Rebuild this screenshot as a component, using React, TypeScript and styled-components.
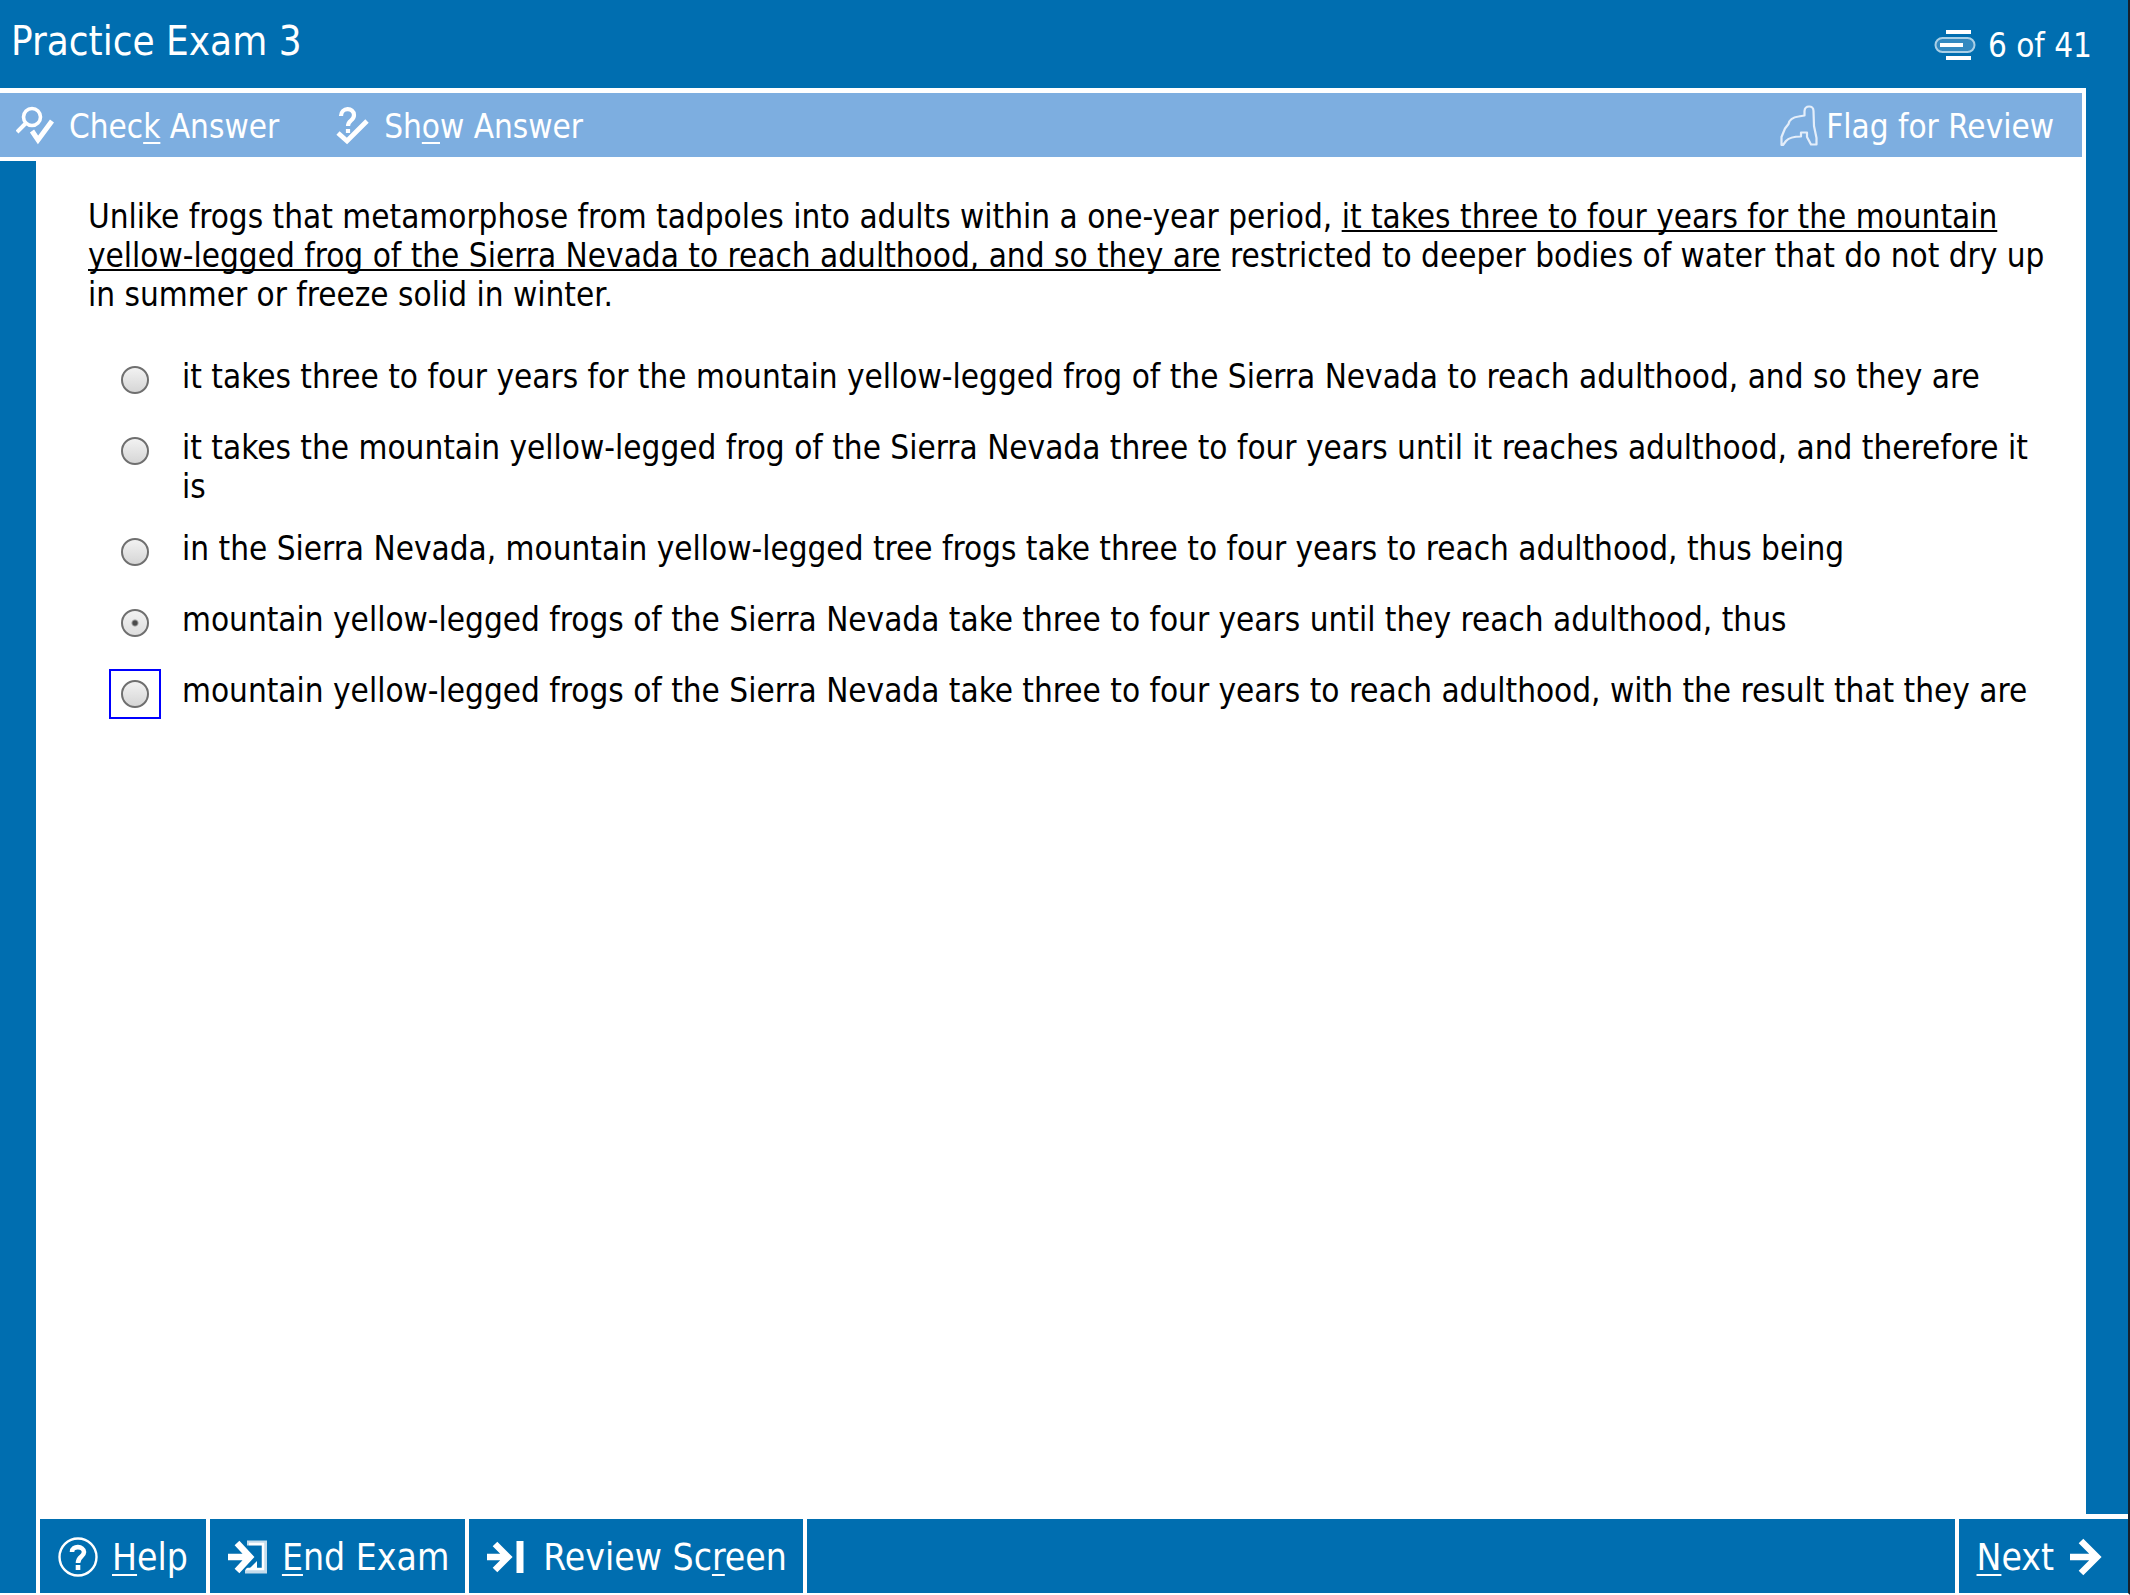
import React, { useState } from "react";
import styled, { createGlobalStyle } from "styled-components";

const blue = "#006eb0";
const lightBlue = "#7daee0";
const uiFont = '"DejaVu Sans Condensed", "Noto Sans", sans-serif';

const GlobalStyle = createGlobalStyle`
  * { box-sizing: border-box; }
  body { margin: 0; background: #fff; font-family: ${uiFont}; }
  button { font: inherit; color: inherit; background: none; border: 0; padding: 0; cursor: pointer; }
`;

const Screen = styled.div`
  display: flex;
  flex-direction: column;
  min-height: 100vh;
  border-right: 2px solid #17202b;
  border-bottom: 2px solid #fff;
  background: ${blue};
`;

const Header = styled.header`
  display: flex;
  align-items: center;
  justify-content: space-between;
  height: 88px;
  padding: 2px 36px 0 11px;
  color: #fff;
`;

const Title = styled.h1`
  margin: 0;
  padding-bottom: 8px;
  font-size: 40px;
  font-weight: 400;
`;

const Progress = styled.div`
  display: flex;
  align-items: center;
  gap: 12px;
  font-size: 33px;
`;

const Middle = styled.div`
  display: flex;
  flex-direction: column;
  flex: 1;
  margin-right: 42px;
`;

const Toolbar = styled.nav`
  display: flex;
  align-items: center;
  gap: 56px;
  height: 73px;
  padding: 2px 28px 0 16px;
  border: solid #fff;
  border-width: 5px 4px 4px 0;
  background: ${lightBlue};
  color: #fff;
`;

const ToolButton = styled.button<{ $gap: number; $end?: boolean }>`
  display: flex;
  align-items: center;
  gap: ${(p) => p.$gap}px;
  margin-left: ${(p) => (p.$end ? "auto" : "0")};
  font-size: 33px;
`;

const Key = styled.span`
  text-decoration: underline;
  text-decoration-thickness: 2px;
  text-underline-offset: 4px;
`;

const Sheet = styled.main`
  flex: 1;
  margin-left: 36px;
  padding: 36px 36px 40px 52px;
  background: #fff;
  color: #000;
  font-size: 33px;
  line-height: 39px;
`;

const Question = styled.p`
  margin: 0;
`;

const Marked = styled.span`
  text-decoration: underline;
  text-decoration-thickness: 2px;
  text-decoration-skip-ink: none;
  text-underline-offset: 2px;
`;

const Options = styled.fieldset`
  display: flex;
  flex-direction: column;
  gap: 21px;
  margin: 41px 0 0;
  padding: 0 0 0 21px;
  border: 0;
`;

const Option = styled.label`
  display: flex;
  align-items: flex-start;
  gap: 21px;
  min-height: 50px;
`;

const RadioBox = styled.span<{ $focused: boolean }>`
  display: grid;
  flex: none;
  place-items: center;
  width: 52px;
  height: 50px;
  border: 2px solid ${(p) => (p.$focused ? "#0000ff" : "transparent")};
`;

const Radio = styled.input`
  appearance: none;
  width: 28px;
  height: 28px;
  margin: 0;
  border: 2px solid #6f6f6f;
  border-radius: 50%;
  background: linear-gradient(#f2f2f2, #d6d6d6);
  outline: none;
  &:checked {
    background: radial-gradient(circle, #4a4a4a 0 2px, transparent 4px), linear-gradient(#f2f2f2, #dedede);
  }
`;

const OptionText = styled.span`
  padding-top: 2px;
`;

const Footer = styled.footer`
  display: flex;
  height: 74px;
  padding-left: 36px;
  color: #fff;
`;

const FooterButton = styled.button<{ $gap: number; $end?: number }>`
  display: flex;
  align-items: center;
  gap: ${(p) => p.$gap}px;
  padding: 2px ${(p) => p.$end ?? 16}px 0 18px;
  border-left: 4px solid #fff;
  font-size: 37px;
`;

const FooterRest = styled.div`
  flex: 1;
  border-left: 4px solid #fff;
`;

const NextCell = styled.div`
  display: flex;
  margin-top: -5px;
  border-top: 5px solid #fff;
`;

const choices = [
  "it takes three to four years for the mountain yellow-legged frog of the Sierra Nevada to reach adulthood, and so they are",
  "it takes the mountain yellow-legged frog of the Sierra Nevada three to four years until it reaches adulthood, and therefore it is",
  "in the Sierra Nevada, mountain yellow-legged tree frogs take three to four years to reach adulthood, thus being",
  "mountain yellow-legged frogs of the Sierra Nevada take three to four years until they reach adulthood, thus",
  "mountain yellow-legged frogs of the Sierra Nevada take three to four years to reach adulthood, with the result that they are",
];

const PagesIcon = () => (
  <svg width="42" height="32" viewBox="0 0 42 32" fill="none" aria-hidden="true">
    <path d="M12 3h25M12 29h25" stroke="#fff" strokeWidth="4" />
    <rect x="1.5" y="9" width="39" height="14" rx="7" fill="#3389c0" stroke="#a9cfe6" strokeWidth="2" />
    <path d="M6 16h23" stroke="#fff" strokeWidth="4" />
  </svg>
);

const CheckIcon = () => (
  <svg width="38" height="40" viewBox="0 0 38 40" fill="none" stroke="#fff" aria-hidden="true">
    <circle cx="16" cy="11" r="8.500" strokeWidth="3.6" />
    <path d="M10 17 1 26" strokeWidth="4" />
    <path d="M16 25l6 9L36 15" strokeWidth="5" />
  </svg>
);

const ShowIcon = () => (
  <svg width="34" height="40" viewBox="0 0 34 40" fill="none" stroke="#fff" aria-hidden="true">
    <path d="M6 10c0-9 13-9 13-1 0 6-6 5-6 11M13 23v4" strokeWidth="4.2" />
    <path d="M3 27l9 8L32 15" strokeWidth="4.8" />
  </svg>
);

const FlagIcon = () => (
  <svg width="38" height="42" viewBox="0 0 38 42" fill="none" stroke="#e4eefa" strokeWidth="2.2" strokeLinejoin="round" aria-hidden="true">
    <path d="M24.500 10.500V6c.5-6 9-6 9 0l.5 15 2.500 12v6.500h-5.500l-4-7.500v-4.500h-6v4c-6 0-12 1-15 4.500l-3 4H1.500v-8l3.500-8.500 3.500-4.500c1-5 6-7 10-7.500z" />
  </svg>
);

const HelpIcon = () => (
  <svg width="40" height="42" viewBox="0 0 40 42" fill="none" stroke="#fff" aria-hidden="true">
    <circle cx="20" cy="21" r="18.5" strokeWidth="2.4" />
    <path d="M14 16c0-7 12-6 12 0 0 5-6 4-6 11M20 29v5" strokeWidth="4.6" />
  </svg>
);

const EndIcon = () => (
  <svg width="40" height="34" viewBox="0 0 40 34" fill="none" aria-hidden="true">
    <path d="M19 3h17.500v28H17" stroke="#c4dcec" strokeWidth="5" />
    <path d="M21 4h14v25H18" stroke="#fff" strokeWidth="2.500" />
    <path d="M29 21v9H20z" fill="#fff" />
    <path d="M1 17h20M10 3l13 14L10 31" stroke={blue} strokeWidth="9" />
    <path d="M0 17h22M9 3l13 14L9 31" stroke="#fff" strokeWidth="6.500" />
  </svg>
);

const ReviewIcon = () => (
  <svg width="38" height="34" viewBox="0 0 38 34" fill="none" stroke="#fff" aria-hidden="true">
    <path d="M0 17h20M8 4l13 13L8 30" strokeWidth="6.500" />
    <path d="M33 1v32" strokeWidth="7" />
  </svg>
);

const NextIcon = () => (
  <svg width="32" height="38" viewBox="0 0 32 38" fill="none" stroke="#fff" aria-hidden="true">
    <path d="M0 19h26M11 3l16 16-16 16" strokeWidth="6.500" />
  </svg>
);

export default function App() {
  const [selected, setSelected] = useState(3);
  const [focused, setFocused] = useState(4);

  return (
    <>
      <GlobalStyle />
      <Screen>
        <Header>
          <Title>Practice Exam 3</Title>
          <Progress>
            <PagesIcon />
            <span>6 of 41</span>
          </Progress>
        </Header>
        <Middle>
          <Toolbar aria-label="Question tools">
            <ToolButton type="button" $gap={15}>
              <CheckIcon />
              <span>Chec<Key>k</Key> Answer</span>
            </ToolButton>
            <ToolButton type="button" $gap={15}>
              <ShowIcon />
              <span>Sh<Key>o</Key>w Answer</span>
            </ToolButton>
            <ToolButton type="button" $gap={8} $end>
              <FlagIcon />
              <span>Flag for Review</span>
            </ToolButton>
          </Toolbar>
          <Sheet>
            <Question id="question">
              Unlike frogs that metamorphose from tadpoles into adults within a one-year period,{" "}
              <Marked>
                it takes three to four years for the mountain yellow-legged frog of the Sierra Nevada to reach
                adulthood, and so they are
              </Marked>{" "}
              restricted to deeper bodies of water that do not dry up in summer or freeze solid in winter.
            </Question>
            <Options aria-labelledby="question">
              {choices.map((text, i) => (
                <Option key={text}>
                  <RadioBox $focused={focused === i}>
                    <Radio
                      type="radio"
                      name="answer"
                      checked={selected === i}
                      onChange={() => setSelected(i)}
                      onFocus={() => setFocused(i)}
                    />
                  </RadioBox>
                  <OptionText>{text}</OptionText>
                </Option>
              ))}
            </Options>
          </Sheet>
        </Middle>
        <Footer>
          <FooterButton type="button" $gap={14} $end={18}>
            <HelpIcon />
            <span><Key>H</Key>elp</span>
          </FooterButton>
          <FooterButton type="button" $gap={14}>
            <EndIcon />
            <span><Key>E</Key>nd Exam</span>
          </FooterButton>
          <FooterButton type="button" $gap={18}>
            <ReviewIcon />
            <span>Review Sc<Key>r</Key>een</span>
          </FooterButton>
          <FooterRest />
          <NextCell>
            <FooterButton type="button" $gap={16} $end={26}>
              <span><Key>N</Key>ext</span>
              <NextIcon />
            </FooterButton>
          </NextCell>
        </Footer>
      </Screen>
    </>
  );
}
